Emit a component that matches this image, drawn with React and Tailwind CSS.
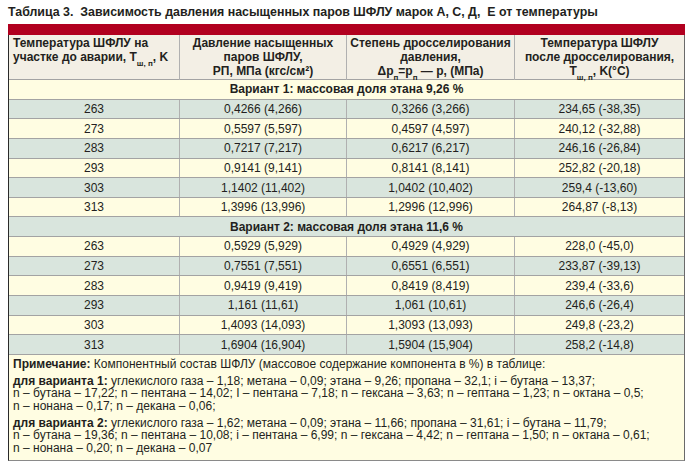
import React from "react";

const v1 = [
  ["263", "0,4266 (4,266)", "0,3266 (3,266)", "234,65 (-38,35)"],
  ["273", "0,5597 (5,597)", "0,4597 (4,597)", "240,12 (-32,88)"],
  ["283", "0,7217 (7,217)", "0,6217 (6,217)", "246,16 (-26,84)"],
  ["293", "0,9141 (9,141)", "0,8141 (8,141)", "252,82 (-20,18)"],
  ["303", "1,1402 (11,402)", "1,0402 (10,402)", "259,4 (-13,60)"],
  ["313", "1,3996 (13,996)", "1,2996 (12,996)", "264,87 (-8,13)"],
];
const v2 = [
  ["263", "0,5929 (5,929)", "0,4929 (4,929)", "228,0 (-45,0)"],
  ["273", "0,7551 (7,551)", "0,6551 (6,551)", "233,87 (-39,13)"],
  ["283", "0,9419 (9,419)", "0,8419 (8,419)", "239,4 (-33,6)"],
  ["293", "1,161 (11,61)", "1,061 (10,61)", "246,6 (-26,4)"],
  ["303", "1,4093 (14,093)", "1,3093 (13,093)", "249,8 (-23,2)"],
  ["313", "1,6904 (16,904)", "1,5904 (15,904)", "258,2 (-14,8)"],
];

const GREEN = "bg-[#d9e5dd]";
const CREAM = "bg-[#fffde2]";

function DataRow({ r, green }) {
  const bg = green ? GREEN : CREAM;
  return (
    <div className={`grid grid-cols-[171px_167px_168px_169px] h-[19.65px] border-b border-[#a3a3a3] ${bg}`}>
      {r.map((c, i) => (
        <div
          key={i}
          className={`flex items-center justify-center ${i < 3 ? "border-r border-[#b0b0b0]" : ""}`}
        >
          {c}
        </div>
      ))}
    </div>
  );
}

function VariantRow({ children, green }) {
  return (
    <div
      className={`h-[19.65px] flex items-center justify-center font-bold border-b border-[#a3a3a3] ${green ? GREEN : CREAM}`}
    >
      {children}
    </div>
  );
}

const Sub = ({ children }) => (
  <sub className="text-[8px] leading-none align-[-3px]">{children}</sub>
);

export default function App() {
  return (
    <div
      className="w-[691px] h-[470px] bg-white text-[#231f20] text-[12px]"
      style={{ fontFamily: '"Liberation Sans", Arial, sans-serif' }}
    >
      <div className="h-[24px] pl-[8px] leading-[24px] font-bold text-[12.4px]">
        Таблица 3.&nbsp; Зависимость давления насыщенных паров ШФЛУ марок А, С, Д,&nbsp; Е от температуры
      </div>
      <div className="ml-[8px] w-[677px]">
        <div className="h-[11px] bg-[#b1001f]" />
        <div className="border-l border-l-[#2a2a2a] border-r-[1.5px] border-r-[#6a6a6a] border-b border-b-[#8a8a8a]">
          <div className="grid grid-cols-[171px_167px_168px_169px] h-[45px] bg-[#f3efe5] border-b border-[#a3a3a3] font-bold leading-[14px]">
            <div className="border-r border-[#b0b0b0] pl-[4px] pt-[1px]">
              Температура ШФЛУ на
              <br />
              участке до аварии, T<Sub>ш, п</Sub>, K
            </div>
            <div className="border-r border-[#b0b0b0] text-center pt-[1px]">
              Давление насыщенных
              <br />
              паров ШФЛУ,
              <br />
              РП, МПа (кгс/см²)
            </div>
            <div className="border-r border-[#b0b0b0] text-center pt-[1px]">
              Степень дросселирования
              <br />
              давления,
              <br />
              Δp<Sub>п</Sub>=p<Sub>п</Sub> — p, (МПа)
            </div>
            <div className="text-center pt-[1px]">
              Температура ШФЛУ
              <br />
              после дросселирования,
              <br />
              T<Sub>ш, п</Sub>, K(°C)
            </div>
          </div>
          <VariantRow>Вариант 1: массовая доля этана 9,26 %</VariantRow>
          {v1.map((r, i) => (
            <DataRow key={"a" + i} r={r} green={i % 2 === 0} />
          ))}
          <VariantRow green>Вариант 2: массовая доля этана 11,6 %</VariantRow>
          {v2.map((r, i) => (
            <DataRow key={"b" + i} r={r} green={i % 2 === 1} />
          ))}
          <div className={`${CREAM} pl-[4px] pt-[3px] pb-[4px] leading-[12.7px] h-[105px]`}>
            <div>
              <span className="font-bold">Примечание:</span> Компонентный состав ШФЛУ (массовое содержание компонента в %) в таблице:
            </div>
            <div className="mt-[4px]">
              <span className="font-bold">для варианта 1:</span> углекислого газа – 1,18; метана – 0,09; этана – 9,26; пропана – 32,1; i – бутана – 13,37;
              <br />
              n – бутана – 17,22; n – пентана – 14,02; I – пентана – 7,18; n – гексана – 3,63; n – гептана – 1,23; n – октана – 0,5;
              <br />
              n – нонана – 0,17; n – декана – 0,06;
            </div>
            <div className="mt-[4px]">
              <span className="font-bold">для варианта 2:</span> углекислого газа – 1,62; метана – 0,09; этана – 11,66; пропана – 31,61; i – бутана – 11,79;
              <br />
              n – бутана – 19,36; n – пентана – 10,08; i – пентана – 6,99; n – гексана – 4,42; n – гептана – 1,50; n – октана – 0,61;
              <br />
              n – нонана – 0,20; n – декана – 0,07
            </div>
          </div>
        </div>
      </div>
    </div>
  );
}
